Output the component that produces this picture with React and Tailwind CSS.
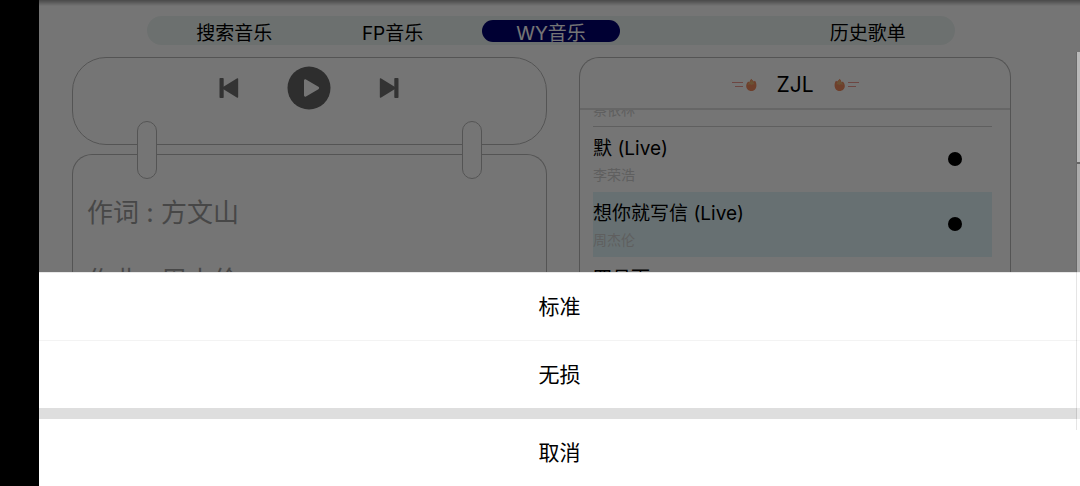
import React, { useState } from "react";

const tabs = ["搜索音乐", "FP音乐", "WY音乐", "", "历史歌单"];

const songs = [
  { id: 1, title: "倒带", artist: "蔡依林" },
  { id: 2, title: "默 (Live)", artist: "李荣浩" },
  { id: 3, title: "想你就写信 (Live)", artist: "周杰伦" },
  { id: 4, title: "四月雨", artist: "周杰伦" },
];

const lyrics = ["作词 : 方文山", "作曲 : 周杰伦"];

const qualities = ["标准", "无损"];

const SkipIcon = ({ flip }) => (
  <svg
    viewBox="0 0 20 22"
    className={`h-[22px] w-5 fill-[#707070] ${flip ? "-scale-x-100" : ""}`}
    aria-hidden="true"
  >
    <rect x="0.5" y="1" width="4.2" height="20" rx="0.8" />
    <path d="M18.2 1.3C18.7 1 19.2 1.2 19.2 1.9V20.1C19.2 20.8 18.7 21 18.2 20.7L4 12V10Z" />
  </svg>
);

const PlayIcon = () => (
  <svg viewBox="0 0 44 44" className="size-11" aria-hidden="true">
    <circle cx="22" cy="22" r="21.5" fill="#646464" />
    <path
      d="M17 14.8C17 13.6 18 13 19 13.6L31.4 20.8C32.4 21.4 32.4 22.6 31.4 23.2L19 30.4C18 31 17 30.4 17 29.2Z"
      fill="#fff"
    />
  </svg>
);

const Fireball = ({ flip }) => (
  <svg
    viewBox="0 0 26 14"
    className={`h-[14px] w-[26px] ${flip ? "-scale-x-100" : ""}`}
    aria-hidden="true"
  >
    <path d="M1 4.5H12" stroke="#ee9a90" strokeWidth="1" />
    <path d="M4 8.5H12" stroke="#ee9a90" strokeWidth="1" />
    <path
      d="M20.5 0.8C21 2.2 22.2 2.6 22.8 3.6L24 2.8C25 4.2 25.6 5.8 25.4 8C25.2 11 23 13 20.3 13C17.4 13 15.2 10.8 15.2 8C15.2 6 16 4.6 17.2 3.4L18.4 4.4C18.8 2.8 19.4 1.8 20.5 0.8Z"
      fill="#f08a5f"
    />
    <path
      d="M20.4 1.6C20.8 3.4 23.2 4.2 23.6 6.6C22.4 6 21.4 6.4 20.6 7C19.6 6 18.4 6 16.8 7C17 4.8 20 4.2 20.4 1.6Z"
      fill="#e8b070"
    />
  </svg>
);

const Clip = ({ side }) => (
  <span
    className={`absolute -top-[34px] h-[58px] w-5 rounded-full border border-[#b8b8b8] bg-white ${
      side === "left" ? "left-16" : "right-16"
    }`}
  />
);

const App = () => {
  const [activeTab, setActiveTab] = useState("WY音乐");
  const [selected, setSelected] = useState(3);
  const [showSheet, setShowSheet] = useState(true);

  return (
    <div className="flex h-screen overflow-hidden bg-black pl-[39px] font-['Inter','Noto_Sans_CJK_SC',sans-serif] text-black">
      <div className="relative flex min-w-0 flex-1 flex-col bg-white pl-[33px] pr-[69px] pt-4">
        <div className="absolute inset-x-0 top-0 h-1.5 bg-linear-to-b from-neutral-400 to-white" />

        {/* Tabs */}
        <nav className="ml-[75px] mr-14 grid h-[29px] shrink-0 grid-cols-5 items-center rounded-full bg-[#ecf4f2] px-2">
          {tabs.map((tab, i) =>
            tab ? (
              <button
                key={tab}
                onClick={() => setActiveTab(tab)}
                className={`mx-2.5 h-[22px] rounded-full pt-1.5 text-[19px] leading-4 ${
                  activeTab === tab ? "bg-[#000070] text-white" : ""
                }`}
              >
                {tab}
              </button>
            ) : (
              <span key={i} />
            )
          )}
        </nav>

        <div className="mt-3 grid min-h-0 flex-1 grid-cols-[11fr_10fr] gap-8">
          {/* Player and lyrics */}
          <div className="flex min-h-0 flex-col gap-[9px]">
            <div className="flex h-[88px] shrink-0 items-start justify-center gap-12 rounded-[34px] border border-[#b8b8b8] pr-0.5 pt-2">
              <button aria-label="上一首" className="flex h-11 items-center">
                <SkipIcon />
              </button>
              <button aria-label="播放">
                <PlayIcon />
              </button>
              <button aria-label="下一首" className="flex h-11 items-center">
                <SkipIcon flip />
              </button>
            </div>
            <div className="relative min-h-0 flex-1 rounded-t-[20px] border border-b-0 border-[#b8b8b8]">
              <Clip side="left" />
              <Clip side="right" />
              <div className="h-full overflow-hidden px-3.5 pt-6 text-[26px] leading-[68px] text-[#9c9c9c]">
                {lyrics.map((line) => (
                  <p key={line}>{line}</p>
                ))}
              </div>
            </div>
          </div>

          {/* Song list */}
          <div className="flex min-h-0 flex-col rounded-t-[20px] border border-b-0 border-[#b8b8b8]">
            <div className="flex h-[52px] shrink-0 items-center justify-center gap-5 border-b-2 border-[#dedede] pt-1">
              <Fireball />
              <h1 className="text-[21px] leading-7">ZJL</h1>
              <Fireball flip />
            </div>
            <ul className="min-h-0 flex-1 overflow-hidden pl-[13px] pr-[18px]">
              {songs.map((song) => (
                <li
                  key={song.id}
                  className={`h-[65px] border-b first:-mt-12 ${
                    selected === song.id
                      ? "border-[#e0f5f9] bg-[#e0f5f9]"
                      : song.id === 1
                        ? "border-[#d0d0d0]"
                        : "border-transparent"
                  }`}
                >
                  <button
                    onClick={() => setSelected(song.id)}
                    className="flex size-full items-center justify-between pr-[30px] text-left"
                  >
                    <span className="flex flex-col gap-0.5 pt-1.5">
                      <span className="text-[19px] leading-6">{song.title}</span>
                      <span className="text-sm leading-6 text-[#cfcfcf]">
                        {song.artist}
                      </span>
                    </span>
                    <span className="size-3.5 rounded-full bg-black" />
                  </button>
                </li>
              ))}
            </ul>
          </div>
        </div>

        {/* Quality picker */}
        {showSheet && (
          <div className="absolute inset-0 flex flex-col justify-end bg-black/54">
            <div className="border-t border-[#e8e8e8] bg-white text-[21px] leading-7">
              {qualities.map((quality) => (
                <button
                  key={quality}
                  onClick={() => setShowSheet(false)}
                  className="block h-[68px] w-full border-b border-[#f3f3f3] last-of-type:h-[67px] last-of-type:border-0"
                >
                  {quality}
                </button>
              ))}
              <div className="border-t-[11px] border-[#dedede]">
                <button
                  onClick={() => setShowSheet(false)}
                  className="block h-[67px] w-full"
                >
                  取消
                </button>
              </div>
            </div>
          </div>
        )}

        {/* Edge handle */}
        <div className="absolute right-0 top-[52px] flex h-[378px] w-1 flex-col border-l border-black/10">
          <div className="h-28 border-b-2 border-[#666666] bg-white/50" />
          <div className="flex-1 bg-white/40" />
        </div>
      </div>
    </div>
  );
};

export default App;
